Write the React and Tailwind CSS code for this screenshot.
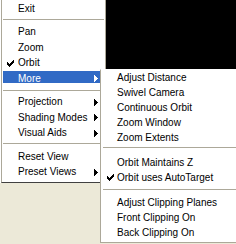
import React from "react";

function Arrow({ white }) {
  const c = white ? "#ffffff" : "#000000";
  return (
    <svg width="4" height="7" viewBox="0 0 4 7" className="block shrink-0" shapeRendering="crispEdges">
      <rect x="0" y="0" width="1" height="7" fill={c} />
      <rect x="1" y="1" width="1" height="5" fill={c} />
      <rect x="2" y="2" width="1" height="3" fill={c} />
      <rect x="3" y="3" width="1" height="1" fill={c} />
    </svg>
  );
}

function Check() {
  return (
    <svg width="7" height="7" viewBox="0 0 7 7" className="block" shapeRendering="crispEdges">
      <rect x="6" y="0" width="1" height="1" fill="#000" />
      <rect x="5" y="1" width="2" height="1" fill="#000" />
      <rect x="0" y="2" width="1" height="1" fill="#000" />
      <rect x="4" y="2" width="3" height="1" fill="#000" />
      <rect x="0" y="3" width="2" height="1" fill="#000" />
      <rect x="3" y="3" width="3" height="1" fill="#000" />
      <rect x="0" y="4" width="5" height="1" fill="#000" />
      <rect x="1" y="5" width="3" height="1" fill="#000" />
      <rect x="2" y="6" width="1" height="1" fill="#000" />
    </svg>
  );
}

function LeftItem({ label, checked, arrow }) {
  return (
    <div className="flex h-[15.5px] items-center">
      <div className="flex w-[16px] shrink-0 pl-[5px]">{checked ? <Check /> : null}</div>
      <span className="leading-none whitespace-nowrap">{label}</span>
      {arrow ? (
        <div className="ml-auto pr-[7px]">
          <Arrow />
        </div>
      ) : null}
    </div>
  );
}

function LeftSep({ pt }) {
  return (
    <div className={`flex h-[8px] flex-col px-[1px] ${pt}`}>
      <div className="h-px shrink-0 bg-[#aca899]" />
    </div>
  );
}

function SubSep({ pt }) {
  return (
    <div className={`flex h-[10px] flex-col pl-[2px] ${pt}`}>
      <div className="h-px shrink-0 bg-[#aca899]" />
    </div>
  );
}

function SubItem({ label, checked }) {
  return (
    <div className="flex h-[15px] items-center">
      <div className="flex w-[16px] shrink-0 pl-[6px]">{checked ? <Check /> : null}</div>
      <span className="leading-none whitespace-nowrap">{label}</span>
    </div>
  );
}

export default function App() {
  return (
    <div className="relative h-[244px] w-[236px] overflow-hidden bg-[#ECE9D8] font-['Liberation_Sans',Arial,sans-serif] text-[10px] text-black">
      <div className="h-[69px] bg-black" />

      {/* main popup menu */}
      <div className="absolute left-0 top-0 w-[106px] bg-white pl-px">
        <div className="border-b border-l border-r border-b-[#404040] border-l-[#aca899] border-r-[#aca899] bg-white pb-[2px] pt-[1px]">
          <LeftItem label="Exit" />
          <LeftSep pt="pt-[2px]" />
          <LeftItem label="Pan" />
          <LeftItem label="Zoom" />
          <LeftItem label="Orbit" checked />
          <div className="grid h-[15.5px] px-[1px]">
            <div className="h-[12px] self-start bg-[#316AC5] [grid-area:1/1]" />
            <div className="flex items-center self-center text-white [grid-area:1/1]">
              <div className="w-[15px] shrink-0" />
              <span className="leading-none">More</span>
              <div className="ml-auto pr-[6px]">
                <Arrow white />
              </div>
            </div>
          </div>
          <LeftSep pt="pt-[3px]" />
          <LeftItem label="Projection" arrow />
          <LeftItem label="Shading Modes" arrow />
          <LeftItem label="Visual Aids" arrow />
          <LeftSep pt="pt-[2px]" />
          <LeftItem label="Reset View" />
          <LeftItem label="Preset Views" arrow />
        </div>
      </div>

      {/* "More" submenu */}
      <div className="absolute left-[100px] top-[69px] w-[140px] border-b border-l border-t border-b-[#aca899] border-l-[#aca899] border-t-white bg-white pb-[2px]">
        <SubItem label="Adjust Distance" />
        <SubItem label="Swivel Camera" />
        <SubItem label="Continuous Orbit" />
        <SubItem label="Zoom Window" />
        <SubItem label="Zoom Extents" />
        <SubSep pt="pt-[2px]" />
        <SubItem label="Orbit Maintains Z" />
        <SubItem label="Orbit uses AutoTarget" checked />
        <SubSep pt="pt-[4px]" />
        <SubItem label="Adjust Clipping Planes" />
        <SubItem label="Front Clipping On" />
        <SubItem label="Back Clipping On" />
      </div>
    </div>
  );
}
